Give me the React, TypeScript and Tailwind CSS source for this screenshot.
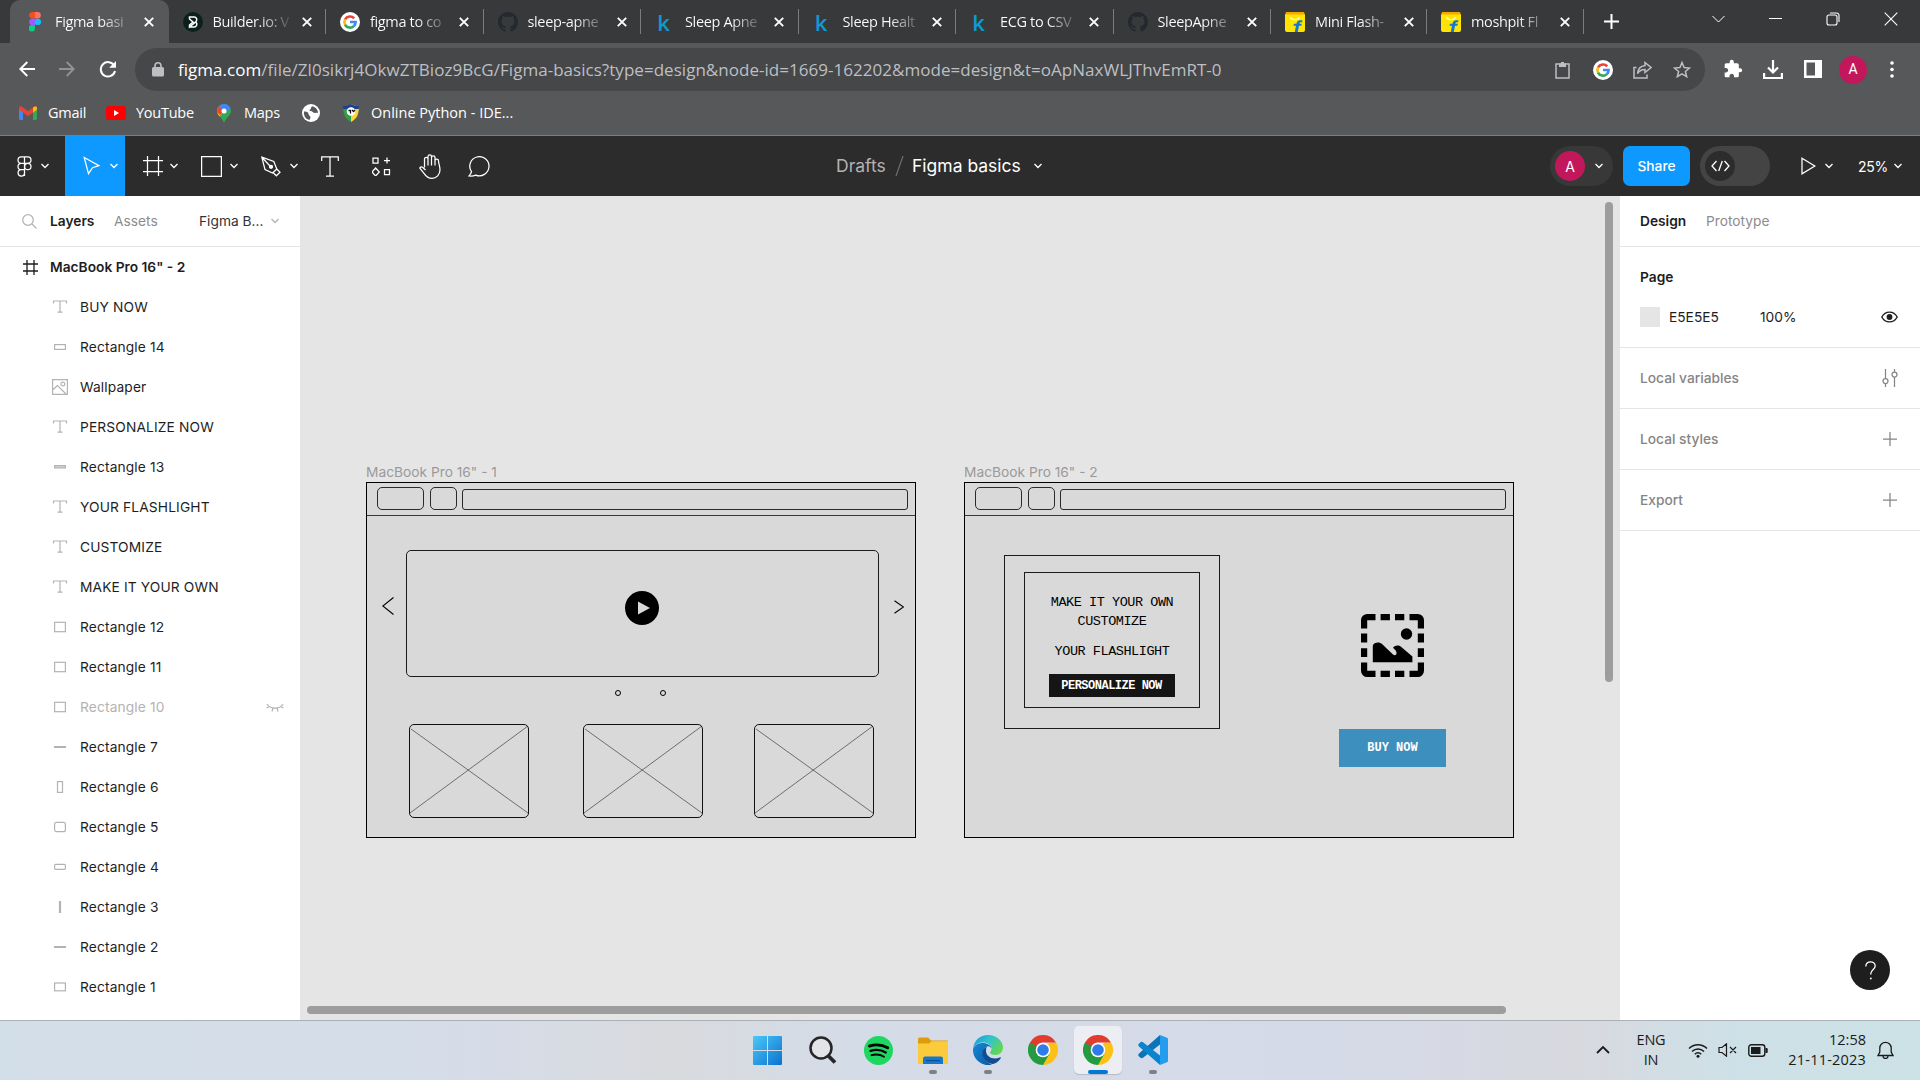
import type { ReactNode } from "react";

type IconProps = { w: number; h: number; className?: string; children: ReactNode; box?: string; sw?: number };

function Ico({ w, h, className = "", children, box, sw = 1.25 }: IconProps) {
  return (
    <svg
      width={w}
      height={h}
      viewBox={box ?? `0 0 ${w} ${h}`}
      fill="none"
      stroke="currentColor"
      strokeWidth={sw}
      className={`shrink-0 ${className}`}
    >
      {children}
    </svg>
  );
}

/* ---------- brand marks ---------- */

function FigmaMark() {
  return (
    <Ico w={12} h={20} className="stroke-none">
      <path d="M3.5 0H6v6.6H3.5a3.3 3.3 0 0 1 0-6.6Z" fill="#f24e1e" />
      <path d="M6 0h2.5a3.3 3.3 0 0 1 0 6.6H6Z" fill="#ff7262" />
      <path d="M3.5 6.6H6v6.6H3.5a3.3 3.3 0 0 1 0-6.6Z" fill="#a259ff" />
      <circle cx="8.9" cy="9.9" r="3.2" fill="#1abcfe" />
      <path d="M3.5 13.2H6v3.3a3.2 3.2 0 1 1-2.5-3.3Z" fill="#0acf83" />
    </Ico>
  );
}

function BuilderMark() {
  return (
    <Ico w={20} h={20} sw={1.5} className="text-white">
      <circle cx="10" cy="10" r="10" fill="#0b201c" stroke="none" />
      <path d="M6.5 5h4.5a2.7 2.7 0 0 1 2 4.6L6.5 15V13l3.5-3-3.5-3ZM6.5 15H11a2.8 2.8 0 0 0 2-4.8" />
    </Ico>
  );
}

function GoogleMark() {
  return (
    <Ico w={20} h={20} sw={2.6}>
      <circle cx="10" cy="10" r="10" fill="#fff" stroke="none" />
      <path d="M14.2 6.4A5.6 5.6 0 0 0 5.1 7.4" stroke="#ea4335" />
      <path d="M5.1 7.3a5.6 5.6 0 0 0 0 5.4" stroke="#fbbc05" />
      <path d="M5 12.6a5.6 5.6 0 0 0 8.8 1.5" stroke="#34a853" />
      <path d="M10 10h5.6a5.6 5.6 0 0 1-1.8 4.2" stroke="#4285f4" />
    </Ico>
  );
}

function GithubMark() {
  return (
    <Ico w={20} h={20} box="0 0 16 16" className="text-[#24292f]">
      <path
        stroke="none"
        fill="currentColor"
        d="M8 0C3.58 0 0 3.58 0 8c0 3.54 2.29 6.53 5.47 7.59.4.07.55-.17.55-.38 0-.19-.01-.82-.01-1.49-2.01.37-2.53-.49-2.69-.94-.09-.23-.48-.94-.82-1.13-.28-.15-.68-.52-.01-.53.63-.01 1.08.58 1.23.82.72 1.21 1.87.87 2.33.66.07-.52.28-.87.51-1.07-1.78-.2-3.64-.89-3.64-3.95 0-.87.31-1.59.82-2.15-.08-.2-.36-1.02.08-2.12 0 0 .67-.21 2.2.82.64-.18 1.32-.27 2-.27s1.36.09 2 .27c1.53-1.04 2.2-.82 2.2-.82.44 1.1.16 1.92.08 2.12.51.56.82 1.27.82 2.15 0 3.07-1.87 3.75-3.65 3.95.29.25.54.73.54 1.48 0 1.07-.01 1.93-.01 2.2 0 .21.15.46.55.38A8.01 8.01 0 0 0 16 8c0-4.42-3.58-8-8-8Z"
      />
    </Ico>
  );
}

function KaggleMark() {
  return (
    <span className="mr-[3px] flex h-5 w-5 items-center justify-center font-['Open_Sans',sans-serif] text-[22px] leading-5 font-semibold text-[#0d9bd0]">
      k
    </span>
  );
}

function FlipkartMark() {
  return (
    <Ico w={20} h={20} className="stroke-none">
      <path d="M1 0h18l1 3H0Z" fill="#f5a800" />
      <path d="M0 2.5h20V18a2 2 0 0 1-2 2H2a2 2 0 0 1-2-2Z" fill="#ffe500" />
      <path d="M5.5 5c.8 3.4 8 3.4 9 0" fill="none" stroke="#fffbd0" strokeWidth="1.2" />
      <path d="M17.5 8.5c-4-.8-5.600.4-6 3.200H9l-.6 2h2.600L9.800 20h3l1.200-6.300h2.300l.5-2h-2.400c.2-1.300.9-1.500 2.600-1.300Z" fill="#1377d4" />
    </Ico>
  );
}

/* ---------- chrome window ---------- */

type Tab = { title: string; icon: ReactNode; width: string; active?: boolean };

const tabs: Tab[] = [
  { title: "Figma basi", icon: <FigmaMark />, width: "w-[158.5px]", active: true },
  { title: "Builder.io: V", icon: <BuilderMark />, width: "w-[157.5px]" },
  { title: "figma to co", icon: <GoogleMark />, width: "w-[157.5px]" },
  { title: "sleep-apne", icon: <GithubMark />, width: "w-[157.5px]" },
  { title: "Sleep Apne", icon: <KaggleMark />, width: "w-[157.5px]" },
  { title: "Sleep Healt", icon: <KaggleMark />, width: "w-[157.5px]" },
  { title: "ECG to CSV", icon: <KaggleMark />, width: "w-[157.5px]" },
  { title: "SleepApne", icon: <GithubMark />, width: "w-[157.5px]" },
  { title: "Mini Flash-", icon: <FlipkartMark />, width: "w-[156px]" },
  { title: "moshpit Fl", icon: <FlipkartMark />, width: "w-[157px]" },
];

function TabStrip() {
  return (
    <div className="flex h-[43px] bg-[#38393b] pl-[10px] text-white">
      {tabs.map((t, i) => (
        <div
          key={i}
          className={`relative flex shrink-0 items-center ${t.width} ${t.active ? "rounded-t-[10px] bg-[#57585a] pl-[15px]" : "pl-[14px]"}`}
        >
          <span className="flex w-5 justify-center">{t.icon}</span>
          <span className="ml-[10px] w-[77px] bg-linear-to-r from-white from-60% to-white/10 to-100% bg-clip-text font-['Open_Sans',sans-serif] text-[14.5px] tracking-[-0.35px] whitespace-nowrap text-transparent">
            {t.title}
          </span>
          <Ico w={10} h={10} sw={1.9} className="ml-[12px]">
            <path d="M.8.8l8.400 8.400M9.200.8.8 9.200" />
          </Ico>
          {i > 0 && <span className="absolute top-[9px] right-0 h-[25px] w-px bg-[#7b7c7e]" />}
        </div>
      ))}
      <div className="flex flex-1 items-center">
        <Ico w={15} h={15} sw={2} className="ml-[20px]">
          <path d="M7.500 0v15M0 7.500h15" />
        </Ico>
        <div className="mr-[22px] mb-[6px] ml-auto flex items-center">
          <Ico w={13} h={8} sw={1}>
            <path d="M.5 1l6 6 6-6" />
          </Ico>
          <Ico w={13} h={2} sw={1} className="ml-[44px]">
            <path d="M0 .5h13" />
          </Ico>
          <Ico w={14} h={14} sw={1.1} className="ml-[44px]">
            <rect x="1" y="3" width="10" height="10" rx="2" />
            <path d="M4 1h6.500A2.500 2.500 0 0 1 13 3.500V10" />
          </Ico>
          <Ico w={14} h={14} sw={1.1} className="ml-[44px]">
            <path d="M.7.7l12.600 12.600M13.300.7.7 13.300" />
          </Ico>
        </div>
      </div>
    </div>
  );
}

function AddressBar() {
  return (
    <div className="flex h-[53px] items-center bg-[#57585a] text-white">
      <Ico w={16} h={16} sw={1.9} className="mb-px ml-[19px]">
        <path d="M16 8H1.500M8.300 1 1.300 8l7 7" />
      </Ico>
      <Ico w={16} h={16} sw={1.9} className="mb-px ml-[24px] text-[#929395]">
        <path d="M0 8h14.500M7.700 1l7 7-7 7" />
      </Ico>
      <Ico w={18} h={17} sw={2} className="mb-px ml-[24px]">
        <path d="M15.300 4.800A7.200 7.200 0 1 0 16 10" />
        <path d="M17 0v6.800h-6.800Z" fill="currentColor" stroke="none" />
      </Ico>
      <div className="ml-[18px] flex h-[43px] w-[1570px] items-center rounded-full bg-[#464749] pl-[17px] text-[#bdbfc3]">
        <Ico w={12} h={15}>
          <rect x="0" y="5" width="12" height="9.500" rx="1.500" fill="currentColor" stroke="none" />
          <path d="M3 6V3.800a3 3 0 0 1 6 0V6" strokeWidth="1.600" />
        </Ico>
        <span className="ml-[14px] font-['Open_Sans',sans-serif] text-[17px] tracking-[0.035px] whitespace-nowrap">
          <span className="text-white">figma.com</span>
          /file/Zl0sikrj4OkwZTBioz9BcG/Figma-basics?type=design&amp;node-id=1669-162202&amp;mode=design&amp;t=oApNaxWLJThvEmRT-0
        </span>
        <div className="mr-[14px] ml-auto flex items-center">
          <Ico w={15} h={18} sw={1.5}>
            <path d="M1 3h13v14H1Z" />
            <path d="M4 2.500h7V6H4ZM6 1h3v2H6Z" fill="currentColor" stroke="none" />
          </Ico>
          <span className="ml-[23px]">
            <GoogleMark />
          </span>
          <Ico w={19} h={18} sw={1.5} className="ml-[20px]">
            <path d="M3.500 6.500H1V17h13v-3.500" />
            <path d="M12 1.500l6 5-6 5V8.500c-3 0-5.500 1-7.500 4C5 8 8 5 12 4.500Z" />
          </Ico>
          <Ico w={18} h={17} sw={1.5} className="ml-[21px]">
            <path d="M9 1.500l2.100 5 5.400.5-4.100 3.500 1.300 5.200L9 12.900l-4.700 2.800 1.300-5.200L1.500 7l5.400-.5Z" />
          </Ico>
        </div>
      </div>
      <Ico w={20} h={20} box="0 0 24 24" className="mb-px ml-[18px]">
        <path
          stroke="none"
          fill="currentColor"
          d="M20.500 11H19V7c0-1.100-.9-2-2-2h-4V3.500a2.500 2.500 0 0 0-5 0V5H4c-1.100 0-1.990.9-1.990 2v3.800H3.500c1.490 0 2.700 1.210 2.700 2.700s-1.210 2.700-2.700 2.700H2V20c0 1.100.9 2 2 2h3.800v-1.500c0-1.490 1.210-2.700 2.700-2.700s2.700 1.210 2.700 2.700V22H17c1.100 0 2-.9 2-2v-4h1.500a2.500 2.500 0 0 0 0-5Z"
        />
      </Ico>
      <Ico w={20} h={19} sw={2.2} className="ml-[20px]">
        <path d="M10 0v12M5 7.500l5 5 5-5M1.100 13v5h17.800v-5" />
      </Ico>
      <Ico w={18} h={18} className="mb-px ml-[21px]">
        <path fill="currentColor" fillRule="evenodd" stroke="none" d="M0 0h18v18H0ZM2.500 2.500v13h8.500v-13Z" />
      </Ico>
      <span className="ml-[17px] flex h-7 w-7 items-center justify-center rounded-full bg-[#c2185b] font-[Roboto,sans-serif] text-[14px]">
        A
      </span>
      <Ico w={4} h={18} className="ml-[23px]">
        <g fill="currentColor" stroke="none">
          <circle cx="2" cy="2" r="1.800" />
          <circle cx="2" cy="8.500" r="1.800" />
          <circle cx="2" cy="15" r="1.800" />
        </g>
      </Ico>
    </div>
  );
}

function Bookmarks() {
  return (
    <div className="flex h-[40px] items-center border-b border-[#7d7e80] bg-[#57585a] pb-[5px] pl-[19px] font-['Open_Sans',sans-serif] text-[14.5px] tracking-[-0.25px] text-white">
      <Ico w={18} h={14} className="stroke-none">
        <path d="M0 2v10.500A1.500 1.500 0 0 0 1.500 14H4V4Z" fill="#4285f4" />
        <path d="M18 2v10.500a1.500 1.500 0 0 1-1.500 1.500H14V4Z" fill="#34a853" />
        <path d="M0 2C0 0 2 0 3 .8l6 4.500 6-4.500C16 0 18 0 18 2v1.500l-9 6.800-9-6.800Z" fill="#ea4335" />
        <path d="M14 1.500C15.500 0 18 0 18 2v1.700l-4 3Z" fill="#fbbc04" />
      </Ico>
      <span className="ml-[11px] w-[38px]">Gmail</span>
      <Ico w={20} h={14} className="ml-[20px]">
        <rect width="20" height="14" rx="3" fill="#f00" stroke="none" />
        <path d="M8 4l5 3-5 3Z" fill="#fff" stroke="none" />
      </Ico>
      <span className="ml-[10px] w-[58px]">YouTube</span>
      <Ico w={14} h={19} className="ml-[23px] stroke-none">
        <path d="M7 0a7 7 0 0 1 7 7c0 4-5 6.500-7 12C5 13.500 0 11 0 7a7 7 0 0 1 7-7Z" fill="#34a853" />
        <path d="M0 7a7 7 0 0 1 1.600-4.500L7 7l-4.500 5.500C1 10.700 0 9 0 7Z" fill="#fbbc04" />
        <path d="M1.600 2.500 7 7 3 11 .3 8.500C-.2 6 .3 4 1.600 2.500Z" fill="#ea4335" />
        <path d="M1.600 2.500A7 7 0 0 1 13.500 4.500L8.500 9 7 7Z" fill="#4285f4" />
        <circle cx="7" cy="7" r="2.500" fill="#fff" />
      </Ico>
      <span className="ml-[13px] w-[37px]">Maps</span>
      <Ico w={18} h={18} className="ml-[21px] stroke-none">
        <circle cx="9" cy="9" r="9" fill="#fff" />
        <path
          d="M2 7.500c2 0 4.500.5 4.500 2.500s2 1.500 2 3.500L7.500 16A7 7 0 0 1 2 7.500ZM10 2.200c-1.500 1.300-.5 2.500-2 3.300-1 .5-.5 1.500.5 1.500 2 0 2.500 2 4.500 2 1.500 0 2-.5 3 .2A7 7 0 0 0 10 2.200Z"
          fill="#57585a"
        />
      </Ico>
      <Ico w={16} h={18} className="ml-[23px] stroke-none">
        <path d="M8 0c2.500 1.500 5 2 8 2 0 8-2 13-8 16Z" fill="#ffd43b" />
        <path d="M8 0C5.500 1.500 3 2 0 2c0 8 2 13 8 16Z" fill="#2f9e44" />
        <path d="M8 0c2.500 1.500 5 2 8 2l-.2 3H.2L0 2c3 0 5.500-.5 8-2Z" fill="#1c3f94" />
        <circle cx="8" cy="7.500" r="4.300" fill="#fff" />
        <path d="M5.500 6.500h2v3M9 6l1.500 1.500L12 6" fill="none" stroke="#111" strokeWidth="1.300" />
      </Ico>
      <span className="ml-[12px] tracking-[0px] whitespace-nowrap">Online Python - IDE...</span>
    </div>
  );
}

/* ---------- figma toolbar ---------- */

function Caret({ className = "" }: { className?: string }) {
  return (
    <Ico w={8} h={6} sw={1.3} className={className}>
      <path d="M.5 1 4 4.500 7.500 1" />
    </Ico>
  );
}

function FigmaToolbar() {
  return (
    <div className="flex h-[60px] items-center bg-[#2c2c2c] font-[Inter,sans-serif] text-white">
      <div className="flex h-full w-[65px] items-center pl-[17px]">
        <Ico w={15} h={21}>
          <path d="M7.500 1v19M4.200.9h6.600a3.200 3.200 0 0 1 0 6.400H4.200a3.200 3.200 0 0 1 0-6.400ZM4.200 7.300h3.300v6.400H4.200a3.200 3.200 0 0 1 0-6.400ZM7.500 13.700v3.100a3.200 3.200 0 1 1-3.300-3.100Z" />
          <circle cx="10.800" cy="10.500" r="3.200" />
        </Ico>
        <Caret className="ml-[9px]" />
      </div>
      <div className="flex h-full w-[60px] items-center bg-[#0d99ff] pl-[18px]">
        <Ico w={17} h={20}>
          <path d="M1.200 1.500 16 9.700l-6.500 2-4 6Z" />
        </Ico>
        <Caret className="ml-[10px]" />
      </div>
      <div className="flex h-full w-[60px] items-center pl-[18px]">
        <Ico w={20} h={20}>
          <path d="M0 4.500h20M0 15.500h20M4.500 0v20M15.500 0v20" />
        </Ico>
        <Caret className="ml-[7px]" />
      </div>
      <div className="flex h-full w-[60px] items-center pl-[16px]">
        <Ico w={21} h={21}>
          <path d="M.6.6h19.800v19.800H.6Z" />
        </Ico>
        <Caret className="ml-[8px]" />
      </div>
      <div className="flex h-full w-[60px] items-center pl-[16px]">
        <Ico w={20} h={21}>
          <path d="M.8 1.200 12.800 5.500l3 7.500-4.300 4-7.500-3.500ZM.8 1.200l8.700 9.300M15.500 12.700l3.500 3.500-3.700 3.600-3.500-3.500" />
          <circle cx="10" cy="10.800" r="1.500" fill="currentColor" />
        </Ico>
        <Caret className="ml-[9px]" />
      </div>
      <div className="flex h-full w-[50px] items-center justify-center">
        <Ico w={18} h={21} className="mr-px">
          <path d="M.7 5V.8h16.600V5M9 .8v19M5 20h8" />
        </Ico>
      </div>
      <div className="flex h-full w-[50px] items-center justify-center">
        <Ico w={19} h={19} className="ml-[2px]">
          <path d="M1 1h5v5H1ZM12.500 12.500h5v5h-5ZM15 .5v6M12 3.500h6M3.600 11l3.700 4-3.700 4-3.600-4Z" />
        </Ico>
      </div>
      <div className="flex h-full w-[50px] items-center justify-center">
        <Ico w={22} h={25}>
          <path d="M5.500 13.500V5a1.700 1.700 0 0 1 3.500 0v6.500V2.600a1.700 1.700 0 0 1 3.500 0v8.900V3.500a1.700 1.700 0 0 1 3.500 0v8V6.800a1.700 1.700 0 0 1 3.500 0c0 3 1.500 5 1.500 9 0 5-3.500 8.500-8 8.500-4 0-6-2-8-5L1 14.500c-.5-1.200 1.500-2 2.500-1.200L6.500 16" />
        </Ico>
      </div>
      <div className="flex h-full w-[50px] items-center justify-center">
        <Ico w={23} h={21} className="mr-px">
          <path d="M1 20c1.300-1.500 2-2.700 2.500-4.300a9.600 9.600 0 1 1 4.200 3.400C5.800 20 3.500 20.300 1 20Z" />
        </Ico>
      </div>
      <div className="ml-[331px] flex items-center text-[17.5px] tracking-[0px]">
        <span className="w-[50px] text-[#b3b3b3]">Drafts</span>
        <Ico w={9} h={20} sw={1.2} className="ml-[9px] text-[#6e6e6e]">
          <path d="M8 0 1 20" />
        </Ico>
        <span className="ml-[8px] w-[109px] whitespace-nowrap">Figma basics</span>
        <Caret className="ml-[13px]" />
      </div>
      <div className="mr-[18px] ml-auto flex items-center">
        <div className="flex h-10 w-[63px] items-center rounded-full bg-[#383838] pl-[5px]">
          <span className="flex h-[30px] w-[30px] items-center justify-center rounded-full bg-[#c2185b] text-[14px]">A</span>
          <Caret className="ml-[10px]" />
        </div>
        <div className="ml-[10px] flex h-10 w-[67px] items-center justify-center rounded-[7px] bg-[#0d99ff] text-[13.75px] font-medium">
          Share
        </div>
        <div className="ml-[10px] flex h-10 w-[70px] items-center rounded-full bg-[#444] pl-[5px]">
          <span className="flex h-[30px] w-[30px] items-center justify-center rounded-full bg-[#2c2c2c]">
            <Ico w={19} h={12} sw={1.3}>
              <path d="M5.500 1 1 6l4.500 5M13.500 1 18 6l-4.500 5M11.300 1 7.700 11" />
            </Ico>
          </span>
        </div>
        <Ico w={15} h={18} className="ml-[31px]">
          <path d="M1 1.200 13.800 9 1 16.800Z" />
        </Ico>
        <Caret className="ml-[9px]" />
        <span className="ml-[25px] w-[28px] text-[14px] tracking-[-0.3px]">25%</span>
        <Caret className="ml-[8px]" />
      </div>
    </div>
  );
}

/* ---------- layers ---------- */

type Kind = "text" | "wide" | "thin" | "image" | "rect" | "line" | "tall" | "round" | "roundwide" | "vline" | "rect1";

const shapes: Record<Kind, ReactNode> = {
  text: <path d="M1.500 4.500V2h13v2.500M8 2v11M5.500 13.200h5" />,
  wide: <rect x="2.600" y="5.600" width="10.800" height="4.800" />,
  thin: <rect x="2.600" y="6.600" width="10.800" height="2.300" fill="#d5d5d5" />,
  image: <path d="M.6.6h14.800v14.800H.6ZM.6 11l4.900-4.500 8.500 8.500M12.700 5a1.900 1.900 0 1 1-3.800 0 1.900 1.900 0 0 1 3.800 0Z" />,
  rect: <rect x="2.600" y="3.300" width="10.800" height="9.400" />,
  rect1: <rect x="2.600" y="4" width="10.800" height="7.800" />,
  line: <path d="M2 8h12" strokeWidth="2" />,
  tall: <rect x="5.500" y="2.600" width="5" height="10.800" />,
  round: <rect x="2.600" y="3.300" width="10.800" height="9.400" rx="2" />,
  roundwide: <rect x="2.600" y="5.300" width="10.800" height="5" rx="1" />,
  vline: <path d="M8 2v12" strokeWidth="2.200" />,
};

const layers: { kind: Kind; name: string; hidden?: boolean }[] = [
  { kind: "text", name: "BUY NOW" },
  { kind: "wide", name: "Rectangle 14" },
  { kind: "image", name: "Wallpaper" },
  { kind: "text", name: "PERSONALIZE NOW" },
  { kind: "thin", name: "Rectangle 13" },
  { kind: "text", name: "YOUR FLASHLIGHT" },
  { kind: "text", name: "CUSTOMIZE" },
  { kind: "text", name: "MAKE IT YOUR OWN" },
  { kind: "rect", name: "Rectangle 12" },
  { kind: "rect", name: "Rectangle 11" },
  { kind: "rect", name: "Rectangle 10", hidden: true },
  { kind: "line", name: "Rectangle 7" },
  { kind: "tall", name: "Rectangle 6" },
  { kind: "round", name: "Rectangle 5" },
  { kind: "roundwide", name: "Rectangle 4" },
  { kind: "vline", name: "Rectangle 3" },
  { kind: "line", name: "Rectangle 2" },
  { kind: "rect1", name: "Rectangle 1" },
];

function LayersPanel() {
  return (
    <div className="w-[300px] shrink-0 overflow-hidden bg-white text-[#1e1e1e]">
      <div className="flex h-[51px] items-center border-b border-[#e5e5e5] pl-[22px]">
        <Ico w={15} h={15} className="text-[#b3b3b3]">
          <circle cx="6" cy="6" r="5.300" />
          <path d="M10 10l4.500 4.500" />
        </Ico>
        <span className="ml-[13px] w-[64px] font-semibold">Layers</span>
        <span className="w-[85px] text-[#8c8c8c]">Assets</span>
        <span className="w-[72px] text-[#333]">Figma B...</span>
        <Caret className="text-[#b3b3b3]" />
      </div>
      <div className="flex h-10 items-center pl-[23px]">
        <Ico w={15} h={15} sw={1.3}>
          <path d="M0 4h15M0 11h15M4 0v15M11 0v15" />
        </Ico>
        <span className="ml-[12px] font-semibold">MacBook Pro 16" - 2</span>
      </div>
      {layers.map((l) => (
        <div key={l.name} className={`flex h-10 items-center pl-[52px] ${l.hidden ? "text-[#b3b3b3]" : ""}`}>
          <Ico w={16} h={16} sw={1.2} className="text-[#b3b3b3]">
            {shapes[l.kind]}
          </Ico>
          <span className="ml-[12px] tracking-[0.14px]">{l.name}</span>
          {l.hidden && (
            <Ico w={18} h={9} sw={1.2} className="mr-[16px] ml-auto">
              <path d="M1 1c3.500 5.500 12.500 5.500 16 0M3.500 3.500.5 5M14.500 3.500l3 1.500M7 5.200 6 8.500M11 5.200l1 3.300" />
            </Ico>
          )}
        </div>
      ))}
    </div>
  );
}

/* ---------- canvas ---------- */

function BrowserBar() {
  return (
    <div className="flex h-[33px] border-b border-[#3a3a3a] pt-[4px] pl-[10px]">
      <div className="h-[23px] w-[47px] rounded-[5px] border border-[#2a2a2a]" />
      <div className="ml-[6px] h-[23px] w-[27px] rounded-[5px] border border-[#2a2a2a]" />
      <div className="mt-[2px] ml-[5px] h-[21px] w-[446px] rounded-[3px] border border-[#2a2a2a]" />
    </div>
  );
}

function CrossCard() {
  return (
    <div className="h-[94px] w-[120px] rounded-[5px] border border-[#111]">
      <Ico w={118} h={92} sw={0.5} className="text-black">
        <path d="M1 4l117 84M0 88 118 1" />
      </Ico>
    </div>
  );
}

function FrameOne() {
  return (
    <div className="absolute top-[268px] left-[66px] w-[550px]">
      <div className="flex h-[18px] items-center pb-px text-[13.75px] text-[#9a9a9a]">MacBook Pro 16" - 1</div>
      <div className="h-[356px] border border-black bg-[#d9d9d9] text-black">
        <BrowserBar />
        <div className="mt-[34px] flex items-center pl-[15px]">
          <Ico w={12} h={18} sw={1.1} className="-mt-[16px]">
            <path d="M11.500 .5.800 9l10.700 8.500" />
          </Ico>
          <div className="ml-[12px] flex h-[127px] w-[473px] items-center justify-center rounded-[5px] border border-[#1c1c1c]">
            <Ico w={34} h={34} className="mt-[-12px] mr-[2px] stroke-none">
              <circle cx="17" cy="17" r="17" fill="#000" />
              <path d="M13 10.500 25 17l-12 6.500Z" fill="#d9d9d9" />
            </Ico>
          </div>
          <Ico w={10} h={14} sw={1.1} className="-mt-[13px] ml-[15px]">
            <path d="M.5.800 9.500 7l-9 6.200" />
          </Ico>
        </div>
        <div className="mt-[13px] flex gap-[39px] pl-[248px]">
          <span className="h-[6px] w-[6px] rounded-full border border-black" />
          <span className="h-[6px] w-[6px] rounded-full border border-black" />
        </div>
        <div className="mt-[28px] flex pl-[42px]">
          <CrossCard />
          <div className="ml-[54px]">
            <CrossCard />
          </div>
          <div className="ml-[51px]">
            <CrossCard />
          </div>
        </div>
      </div>
    </div>
  );
}

function WallpaperIcon() {
  return (
    <Ico w={63} h={63} className="stroke-none">
      <g fill="#000">
        <path d="M6.300 0h8.200v6.200H6.200v8.200H0V6.300A6.300 6.300 0 0 1 6.300 0ZM48.500 0h8.200A6.300 6.300 0 0 1 63 6.300v8.100h-6.200V6.200h-8.300ZM0 48.400h6.200v8.300h8.300V63H6.300A6.300 6.300 0 0 1 0 56.700ZM56.800 48.400H63v8.300a6.300 6.300 0 0 1-6.300 6.300h-8.200v-6.300h8.300Z" />
        <path d="M19.600 0h9.300v6.200h-9.300ZM34 0h9.300v6.200H34ZM19.600 56.700h9.300V63h-9.300ZM34 56.700h9.300V63H34ZM0 19.500h6.200v9H0ZM0 34.300h6.200v8.800H0ZM56.800 19.500H63v9h-6.200ZM56.800 34.300H63v8.800h-6.200Z" />
        <circle cx="45.500" cy="20" r="5.700" />
        <path d="M11.800 48.300V31.500c1-3 6.500-4.300 9.500-1.300L32 40.500c1.800 1.500 4 .4 3.500-2-.3-2.200-2.300-3.500-3.500-4.700 2-3 6-3 8-1l11.400 9.800v5.700Z" />
      </g>
    </Ico>
  );
}

function FrameTwo() {
  return (
    <div className="absolute top-[268px] left-[664px] w-[550px]">
      <div className="flex h-[18px] items-center pb-px text-[13.75px] text-[#9a9a9a]">MacBook Pro 16" - 2</div>
      <div className="h-[356px] border border-black bg-[#d9d9d9] text-black">
        <BrowserBar />
        <div className="flex items-start pt-[39px] pl-[39px]">
          <div className="h-[174px] w-[216px] border border-[#1c1c1c] pt-[16px] pl-[19px]">
            <div className="flex h-[136px] w-[176px] flex-col items-center border border-[#1c1c1c] pt-[20px] font-['Liberation_Mono',monospace] text-[13.5px] tracking-[-0.45px]">
              <span className="h-[20px] leading-[20px]">MAKE IT YOUR OWN</span>
              <span className="h-[20px] leading-[18px]">CUSTOMIZE</span>
              <span className="mt-[9px] h-[20px] leading-[20px]">YOUR FLASHLIGHT</span>
              <span className="mt-[12px] mr-px flex h-[23px] w-[126px] items-center justify-center bg-[#151515] text-[12px] font-bold tracking-[-0.5px] text-white">
                PERSONALIZE NOW
              </span>
            </div>
          </div>
          <div className="ml-[119px] flex w-[107px] flex-col items-center pt-[59px]">
            <WallpaperIcon />
            <div className="mt-[52px] flex h-[38px] w-[107px] items-center justify-center bg-[#3d8fbe] font-['Liberation_Mono',monospace] text-[12px] font-bold tracking-[0px] text-white">
              BUY NOW
            </div>
          </div>
        </div>
      </div>
    </div>
  );
}

function Canvas() {
  return (
    <div className="relative w-[1320px] shrink-0 bg-[#e5e5e5]">
      <FrameOne />
      <FrameTwo />
      <span className="absolute top-[6px] right-[7px] h-[480px] w-[8px] rounded-full bg-[#9d9d9d]" />
      <span className="absolute bottom-[6px] left-[7px] h-[8px] w-[1199px] rounded-full bg-[#9d9d9d]" />
    </div>
  );
}

/* ---------- design panel ---------- */

function Plus() {
  return (
    <Ico w={14} h={14} className="mr-[23px] ml-auto">
      <path d="M7 0v14M0 7h14" />
    </Ico>
  );
}

function DesignPanel() {
  return (
    <div className="relative flex-1 bg-white text-[#1e1e1e]">
      <div className="flex h-[51px] items-center border-b border-[#e5e5e5] pl-[20px]">
        <span className="w-[66px] font-semibold">Design</span>
        <span className="text-[#8c8c8c]">Prototype</span>
      </div>
      <div className="h-[101px] border-b border-[#e5e5e5] pt-[10px] pl-[20px]">
        <div className="flex h-10 items-center font-semibold">Page</div>
        <div className="flex h-10 items-center">
          <span className="h-5 w-5 bg-[#e5e5e5]" />
          <span className="ml-[9px] w-[91px]">E5E5E5</span>
          <span>100%</span>
          <Ico w={17} h={12} sw={1.4} className="mr-[22px] ml-auto">
            <path d="M.800 6c3.500-6.500 11.900-6.500 15.400 0-3.500 6.500-11.900 6.500-15.400 0Z" />
            <circle cx="8.500" cy="6" r="2.200" fill="currentColor" />
          </Ico>
        </div>
      </div>
      <div className="flex h-[61px] items-center border-b border-[#e5e5e5] pl-[20px] font-medium text-[#858585]">
        Local variables
        <Ico w={16} h={18} className="mr-[22px] ml-auto">
          <path d="M3.500 0v9.500M3.500 14.500V18M12.500 8v10M12.500 0v3" />
          <circle cx="3.500" cy="12" r="2.500" />
          <circle cx="12.500" cy="5.500" r="2.500" />
        </Ico>
      </div>
      <div className="flex h-[61px] items-center border-b border-[#e5e5e5] pl-[20px] font-medium text-[#858585]">
        Local styles
        <Plus />
      </div>
      <div className="flex h-[61px] items-center border-b border-[#e5e5e5] pl-[20px] font-medium text-[#858585]">
        Export
        <Plus />
      </div>
      <div className="absolute right-[30px] bottom-[30px] flex h-10 w-10 items-center justify-center rounded-full bg-[#1e1e1e] text-white">
        <Ico w={11} h={19} sw={1.3}>
          <path d="M.8 5.500C.8 2.500 2.800.8 5.500.8s4.700 1.700 4.700 4.200c0 3.500-4.400 4-4.400 7.500v1" />
          <circle cx="5.800" cy="17.500" r=".9" fill="currentColor" stroke="none" />
        </Ico>
      </div>
    </div>
  );
}

/* ---------- taskbar ---------- */

function ChromeMark() {
  return (
    <Ico w={30} h={30} className="stroke-none">
      <path d="M15 15l6.500-7.500H28A15 15 0 0 1 15 30Z" fill="#fbc116" />
      <path d="M15 15l6.500 3.700L15 30A15 15 0 0 1 2 7.500Z" fill="#249a41" />
      <path d="M2 7.500A15 15 0 0 1 28 7.500H15a7.500 7.500 0 0 0-6.500 11.200Z" fill="#e33b2e" />
      <path d="M2 7.500l6.500 11.200L15 15Z" fill="#249a41" />
      <circle cx="15" cy="15" r="7.300" fill="#fff" />
      <circle cx="15" cy="15" r="5.800" fill="#2f7bea" />
    </Ico>
  );
}

function EdgeMark() {
  return (
    <svg width="30" height="30" viewBox="0 0 30 30" className="shrink-0">
      <defs>
        <linearGradient id="eg" x1="0" y1="0" x2="1" y2=".6">
          <stop offset="0" stopColor="#1b93d8" />
          <stop offset=".5" stopColor="#30c3d0" />
          <stop offset="1" stopColor="#62d750" />
        </linearGradient>
        <linearGradient id="eb" x1="0" y1="0" x2="1" y2="1">
          <stop offset="0" stopColor="#1488d8" />
          <stop offset="1" stopColor="#0c59a4" />
        </linearGradient>
      </defs>
      <path d="M0 14C.8 5.500 7 0 15 0c8.500 0 15 6 15 12.500 0 4.500-3.500 7.500-7.500 7.500-3.500 0-5.500-1.300-5.500-2.500 0-.8 1.500-1.500 1.500-4C18.500 10 14.500 7.500 10 7.500 5 7.500 1.500 10 0 14Z" fill="url(#eg)" />
      <path d="M0 14c1.500-4 5.500-6 9.500-6 5 0 8.800 2.500 9 5.500-1-1.700-3-2.500-4.500-2-4 1.500-5 6-3.500 10 1.500 4 4.500 7 8.500 7.900A15 15 0 0 1 0 14Z" fill="url(#eb)" />
      <path d="M14 11.600c-4 1.500-5.500 6-4 10 1.700 4.500 6 7.500 10 7.400 3-.8 6-3 7.700-5.800.4-.8-.2-1.200-1-.8-6 2.800-13 0-13.700-5.900-.2-2 .3-3.700 1-4.900Z" fill="#0f4c92" />
    </svg>
  );
}

function TaskApp({ children, mark, active }: { children: ReactNode; mark?: boolean; active?: boolean }) {
  return (
    <div
      className={`relative flex h-12 w-12 items-center justify-center ${active ? "rounded-[5px] bg-[#eceef4] shadow-[0_1px_1px_rgba(0,0,0,0.15)]" : ""}`}
    >
      {children}
      {mark && <span className="absolute bottom-0 left-5 h-[4px] w-[8px] rounded-full bg-[#7d8088]" />}
      {active && <span className="absolute bottom-0 left-[14px] h-[4px] w-5 rounded-full bg-[#0078d7]" />}
    </div>
  );
}

function Taskbar() {
  return (
    <div className="flex h-[60px] border-t border-[#aab0b6] bg-[linear-gradient(90deg,#d3dfe8_0%,#d5dce8_24%,#d9dade_35%,#d4dce7_44%,#d5dae8_70%,#d8d9df_82%,#cee0e7_90%,#cce2e6_100%)] pl-[743px] text-[#1b1b1b]">
      <div className="flex items-center gap-[7px] pb-px">
        <TaskApp>
          <svg width="29" height="29" viewBox="0 0 29 29">
            <defs>
              <linearGradient id="wn" x1="0" y1="0" x2="1" y2="1">
                <stop offset="0" stopColor="#4cc8f8" />
                <stop offset="1" stopColor="#0a72ce" />
              </linearGradient>
            </defs>
            <path d="M0 1a1 1 0 0 1 1-1h13v14H0ZM15 0h13a1 1 0 0 1 1 1v13H15ZM0 15h14v14H1a1 1 0 0 1-1-1ZM15 15h14v13a1 1 0 0 1-1 1H15Z" fill="url(#wn)" />
          </svg>
        </TaskApp>
        <span className="-ml-[6px] w-0" />
        <TaskApp>
          <Ico w={28} h={28} sw={2.5} className="text-[#262626]">
            <circle cx="12" cy="12" r="10.500" fill="#e3e4e8" />
            <path d="M19.500 20 26 26.500" strokeWidth="3.800" />
          </Ico>
        </TaskApp>
        <TaskApp>
          <Ico w={29} h={29} className="text-black">
            <circle cx="14.500" cy="14.500" r="14.500" fill="#1ed760" stroke="none" />
            <g strokeLinecap="round">
              <path d="M5.500 10c6-1.800 13-1.200 18.200 1.700" strokeWidth="2.900" />
              <path d="M6.500 14.800c5-1.500 11-.9 15.300 1.700" strokeWidth="2.300" />
              <path d="M7.500 19.200c4-1.200 9-.7 12.500 1.500" strokeWidth="1.900" />
            </g>
          </Ico>
        </TaskApp>
        <TaskApp mark>
          <Ico w={30} h={27} className="stroke-none">
            <path d="M0 2a1.500 1.500 0 0 1 1.500-1.500H10L13 3.500h16a1 1 0 0 1 1 1V8H0Z" fill="#dc9c0c" />
            <path d="M0 6.500h11l2.500-2.300H30V26a1 1 0 0 1-1 1H1a1 1 0 0 1-1-1Z" fill="#fccb3c" />
            <path d="M5 27v-5.500a2 2 0 0 1 2-2h16a2 2 0 0 1 2 2V27Z" fill="#1478cf" />
            <path d="M8 23h14v1.200H8Z" fill="#0b4f93" />
          </Ico>
        </TaskApp>
        <TaskApp mark>
          <EdgeMark />
        </TaskApp>
        <TaskApp>
          <ChromeMark />
        </TaskApp>
        <TaskApp active>
          <ChromeMark />
        </TaskApp>
        <TaskApp mark>
          <Ico w={30} h={30} className="stroke-none">
            <path d="M22 0 1 18.500c-1 1-1 2 0 3l1.500 1.300c.8.700 1.800.6 2.500 0L22 9.500Z" fill="#0b74b8" />
            <path d="M22 30 1 11.500c-1-1-1-2 0-3l1.500-1.300c.8-.7 1.800-.6 2.500 0L22 20.500Z" fill="#0a84cc" />
            <path d="M22 0l7 2.800a1.500 1.500 0 0 1 1 1.400v21.600a1.500 1.500 0 0 1-1 1.400L22 30Z" fill="#259cee" />
          </Ico>
        </TaskApp>
      </div>
      <div className="mr-[26px] ml-auto flex items-center pb-px font-['Open_Sans',sans-serif] text-[14.5px] leading-5 tracking-[-0.2px]">
        <Ico w={14} h={8} sw={1.8}>
          <path d="M1 7l6-6 6 6" />
        </Ico>
        <div className="ml-[25px] w-[32px] text-center">
          ENG
          <br />
          IN
        </div>
        <Ico w={20} h={15} sw={1.5} className="ml-[21px]">
          <path d="M1 5.500a12.700 12.700 0 0 1 18 0M4 8.500a8.500 8.500 0 0 1 12 0M6.800 11.200a4.500 4.500 0 0 1 6.400 0" />
          <circle cx="10" cy="13.300" r="1.500" fill="currentColor" stroke="none" />
        </Ico>
        <Ico w={19} h={14} sw={1.2} className="ml-[10px]">
          <path d="M1 4.500h3L8.500.8v12.400L4 9.500H1ZM12 4l6 6M18 4l-6 6" />
        </Ico>
        <Ico w={20} h={13} sw={1.4} className="ml-[11px]">
          <rect x=".8" y=".8" width="16" height="11.400" rx="2.500" />
          <path d="M3 3h9.500v7H3ZM17.500 4h1.200a1 1 0 0 1 1 1v3a1 1 0 0 1-1 1h-1.200Z" fill="currentColor" stroke="none" />
        </Ico>
        <div className="ml-[19px] w-[79px] text-right tracking-[0.2px] whitespace-nowrap">
          <span className="tracking-[0px]">12:58</span>
          <br />
          21-11-2023
        </div>
        <Ico w={17} h={18} sw={1.3} className="ml-[11px]">
          <path d="M1 14.500 2.800 11V7a5.700 5.700 0 0 1 11.400 0v4l1.800 3.500ZM6 15a2.500 2.500 0 0 0 5 0" />
        </Ico>
      </div>
    </div>
  );
}

export default function App() {
  return (
    <div className="flex h-[1080px] w-[1920px] flex-col overflow-hidden bg-white">
      <TabStrip />
      <AddressBar />
      <Bookmarks />
      <FigmaToolbar />
      <div className="flex h-[824px] font-[Inter,sans-serif] text-[13.75px]">
        <LayersPanel />
        <Canvas />
        <DesignPanel />
      </div>
      <Taskbar />
    </div>
  );
}
